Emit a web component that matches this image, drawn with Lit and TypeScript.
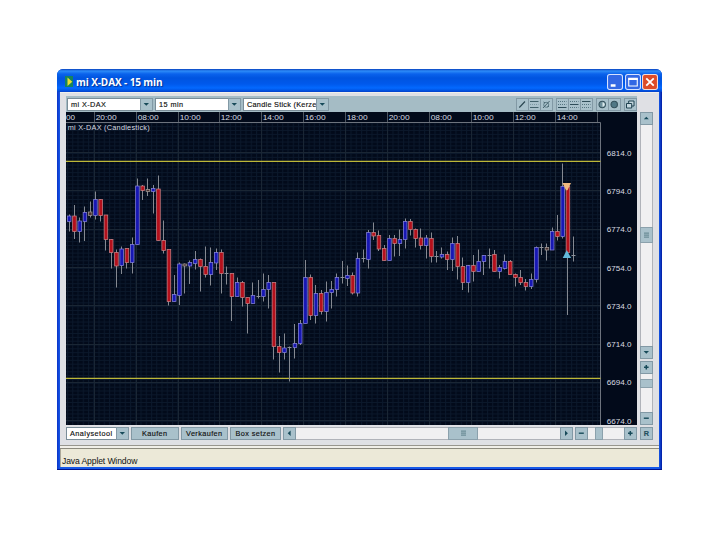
import { LitElement, html, svg, css } from "lit";
import { customElement, property } from "lit/decorators.js";

type Kind = "b" | "r" | "n" | "x";
// high, body top, body bottom, low, kind (up, down, small, doji)
type Candle = [number, number, number, number, Kind];

const CANDLES: Candle[] = [
  [214.5,216,221.5,231.5,"b"],[205,216,231.5,239,"r"],[217.5,221,231.5,242.5,"b"],[206.5,212.5,221.5,241,"b"],
  [201.5,212,215.5,217.5,"n"],[191.5,199.5,215.5,219.5,"b"],[199,199.5,215.5,221.5,"r"],[215,215,239.5,250.5,"r"],
  [239,239.5,252.5,268.5,"r"],[249.5,252.5,266,287.5,"r"],[246.5,249,265.5,274,"b"],[248.5,248.5,262.5,268.5,"r"],
  [237.5,244.5,262.5,273.5,"b"],[178.5,186,244.5,244.5,"b"],[185,186,190.5,200,"r"],[178.5,189.5,191.5,196,"n"],
  [185,188.5,191.5,213.5,"b"],[175.5,189,240.5,240.5,"r"],[220.5,240.5,250.5,253.5,"r"],[249.5,249.5,301.5,305.5,"r"],
  [275,294.5,301.5,301.5,"b"],[262.5,264,295.5,305,"b"],[263.5,264,266,293.5,"n"],[260.5,262.5,266,284,"b"],
  [251,259.5,263.5,269.5,"b"],[258.5,259.5,266.5,291.5,"r"],[246.5,266.5,274.5,277.5,"r"],[247.5,262.5,274.5,285.5,"b"],
  [248.5,252.5,263,270,"b"],[249.5,252.5,273.5,293.5,"r"],[266.5,273,274,284.5,"x"],[273.5,273.5,296.5,321,"r"],
  [277.5,282.5,296.5,296.5,"b"],[281,282.5,297.5,306.5,"r"],[297.5,297.5,303.5,333.5,"r"],[282.5,295.5,303.5,303.5,"b"],
  [280,296,296.5,298.5,"x"],[273.5,289.5,296.5,301.5,"b"],[275,282.5,289.5,308.5,"b"],[282.5,282.5,346.5,359.5,"r"],
  [336,346.5,352.5,372.5,"r"],[333.5,348,352.5,359.5,"b"],[346.5,347.5,348,381.5,"x"],[324,343.5,347.5,358.5,"b"],
  [320,323.5,343.5,345,"b"],[260,277.5,323.5,323.5,"b"],[274.5,277.5,315.5,320,"r"],[285,293.5,315.5,323.5,"b"],
  [290,293.5,311.5,314.5,"r"],[281.5,292.5,311.5,321.5,"b"],[281,289.5,292.5,308.5,"b"],[273.5,277.5,289.5,296.5,"b"],
  [261,277.5,278.5,283.5,"x"],[265.5,275.5,278.5,286,"b"],[272.5,275.5,293,294.5,"r"],[252.5,258.5,293,296.5,"b"],
  [249.5,258.5,259,262.5,"x"],[230,232.5,259.5,268.5,"b"],[222.5,232.5,236,240,"r"],[230.5,235.5,249,251,"r"],
  [245,248.5,260.5,260.5,"r"],[235,238.5,260.5,260.5,"b"],[235,238.5,243.5,256.5,"r"],[229.5,239.5,243.5,256,"b"],
  [218.5,221.5,239.5,248.5,"b"],[219,221.5,229.5,235.5,"r"],[228.5,229.5,238.5,247.5,"r"],[228.5,238,245.5,249.5,"r"],
  [235,238,245.5,258.5,"b"],[232.5,238.5,256.5,262.5,"r"],[251,256.5,257,262.5,"x"],[247.5,254.5,257,258.5,"b"],
  [251.5,254.5,259.5,270,"r"],[237.5,243.5,259.5,271,"b"],[236,243.5,266.5,279.5,"r"],[257.5,266.5,282.5,290,"r"],
  [265,265.5,282.5,292.5,"b"],[255,265.5,271.5,281.5,"r"],[249.5,261.5,271.5,271.5,"b"],[255,255.5,261.5,275,"b"],
  [248.5,255,256,268.5,"x"],[250,254.5,271.5,271.5,"r"],[265,267.5,271.5,278.5,"b"],[254.5,261.5,268.5,269.5,"b"],
  [260,261.5,274.5,274.5,"r"],[273.5,274.5,277.5,286.5,"r"],[270,277.5,282.5,285,"r"],[279,282.5,286.5,290.5,"r"],
  [273.5,279.5,286.5,289,"b"],[246.5,247.5,279.5,282.5,"b"],[243.5,247,248,255,"x"],[243.5,247.5,250,260.5,"n"],
  [227.5,231.5,250,250,"b"],[215,231.5,236.5,240.5,"r"],[163.5,186.5,236.5,238.5,"b"],[186.5,186.5,252.5,315,"r"],
  [236.5,255,256,261.5,"x"],
];
const FILL: Record<Kind, string> = { b: "#1717b4", r: "#b4101c", n: "#4a3030", x: "" };
const EDGE: Record<Kind, string> = { b: "#8583d6", r: "#c98084", n: "#a39a96", x: "" };
const TIMES = ["20:00","08:00","10:00","12:00","14:00","16:00","18:00","20:00","08:00","10:00","12:00","14:00"];
const PRICES = ["6814.0","6794.0","6774.0","6754.0","6734.0","6714.0","6694.0","6674.0"];

@customElement("candle-chart")
class CandleChart extends LitElement {
  static styles = css`
    :host { display: block; width: 571px; height: 313px; }
    svg { display: block; }
    text { font-family: "Liberation Sans", Arial, sans-serif; fill: #d8dbe1; }
    .axis { font-size: 8px; }
    .name { font-size: 7.3px; }
  `;
  private candle([hi, top, bot, lo, kind]: Candle, i: number) {
    const x = 69.1 + i * 5.25;
    const c = Math.floor(x) + 0.5;
    const wick = svg`<line x1=${c} x2=${c} y1=${hi} y2=${lo} stroke="#858991" stroke-width="1"/>`;
    if (kind === "x")
      return svg`${wick}<line x1=${c - 2} x2=${c + 2} y1=${Math.floor(top) + 0.5} y2=${Math.floor(top) + 0.5} stroke="#8d929b"/>`;
    return svg`${wick}<rect x=${x - 1.7} y=${top} width="3.6" height=${Math.max(bot - top, 1.5)}
      fill=${FILL[kind]} stroke=${EDGE[kind]} stroke-width=".75"/>`;
  }
  render() {
    return html`<svg width="571" height="313" viewBox="66 112 571 313">
      <defs>
        <pattern id="minor" width="5.25" height="3.83" patternUnits="userSpaceOnUse" x="67" y="122.4">
          <path d="M.5 0V3.83M0 .5H5.25" stroke="#0b182b" stroke-width="1"/>
        </pattern>
      </defs>
      <rect x="66" y="112" width="571" height="313" fill="#020a1a"/>
      <rect x="66" y="123" width="534" height="302" fill="url(#minor)"/>
      ${PRICES.map((_, i) => svg`<line x1="66" x2="600" y1=${Math.round(152 + i * 38.3) + .5} y2=${Math.round(152 + i * 38.3) + .5} stroke="#1a2634"/>`)}
      ${TIMES.map((t, i) => {
        const x = Math.round(93.6 + i * 41.95) + 0.5;
        return svg`<line x1=${x} x2=${x} y1="123" y2="425" stroke="#1a2634"/>
          <line x1=${x} x2=${x} y1="112" y2="122" stroke="#4f5660"/>
          <text class="axis" x=${x + 1.2} y="120" textLength="21" lengthAdjust="spacingAndGlyphs">${t}</text>`;
      })}
      <text class="axis" x="66" y="120" textLength="9" lengthAdjust="spacingAndGlyphs">00</text>
      <path d="M597.5 112V122" stroke="#4f5660"/>
      <path d="M66 122.5H600.5V425" fill="none" stroke="#6d737d"/>
      <text class="name" x="67.7" y="130" textLength="82" lengthAdjust="spacing">mi X-DAX (Candlestick)</text>
      <path d="M66 161.4H600.5M66 378.4H600.5" stroke="#bdb738" stroke-width="1.2"/>
      ${CANDLES.map((c, i) => this.candle(c, i))}
      <path d="M562.5 183H571L567.5 190.3H566Z" fill="#f0b980"/>
      <path d="M566.8 250L571 258H562.7Z" fill="#62b9da"/>
      ${PRICES.map((p, i) => svg`<text class="axis" x="606.7" y=${155.6 + i * 38.3} textLength="24.7" lengthAdjust="spacingAndGlyphs">${p}</text>`)}
    </svg>`;
  }
}

const GLYPHS: Record<string, unknown> = {
  up: svg`<path d="M3.8 7.2L6.3 4.8L8.8 7.2Z" fill="#174a59"/>`,
  down: svg`<path d="M3.6 5H9L6.3 7.8Z" fill="#174a59"/>`,
  left: svg`<path d="M7.6 3.5V8.9L4.7 6.2Z" fill="#174a59"/>`,
  right: svg`<path d="M5 3.5V8.9L7.9 6.2Z" fill="#174a59"/>`,
  plus: svg`<path d="M4 6.2H8.6M6.3 3.9V8.5" stroke="#174a59" stroke-width="1.5"/>`,
  minus: svg`<path d="M3.8 6.2H8.8" stroke="#174a59" stroke-width="1.4"/>`,
  line: svg`<path d="M3.3 9.5L9 3.5" stroke="#2a4550" stroke-width="1.1"/>`,
  channel: svg`<path d="M2 3.5H10.5M2 9.5H10.5" stroke="#41616b"/><path d="M2 6.5H10.5" stroke="#7b98a3" stroke-dasharray="1 1"/>`,
  cross: svg`<circle cx="6.2" cy="6.8" r="2.5" fill="none" stroke="#557580" stroke-width=".9"/><path d="M3 10L9.6 3M3.5 4L5 5M7.5 9L9 8" stroke="#3c5964" stroke-width=".9"/>`,
  low: svg`<path d="M2 3.5H10.5M2 6.5H10.5" stroke="#557580" stroke-dasharray="1 1"/><path d="M2 9.5H10.5" stroke="#2f4d59"/>`,
  mid: svg`<path d="M2 3.5H10.5M2 9.5H10.5" stroke="#557580" stroke-dasharray="1 1"/><path d="M2 6.5H10.5" stroke="#2f4d59"/>`,
  high: svg`<path d="M2 6.5H10.5M2 9.5H10.5" stroke="#557580" stroke-dasharray="1 1"/><path d="M2 3.5H10.5" stroke="#2f4d59"/>`,
  half: svg`<circle cx="6.2" cy="6.5" r="3.2" fill="#6f919d" stroke="#34515c" stroke-width="1.1"/><path d="M6.5 4.2A2.3 2.3 0 0 1 6.5 8.8Z" fill="#dbe9ec"/>`,
  full: svg`<circle cx="6.2" cy="6.5" r="3.2" fill="#507886" stroke="#34515c" stroke-width="1.1"/>`,
  windows: svg`<path d="M4.7 3H10V8H4.7Z" fill="#c5d8df" stroke="#1f4250"/><path d="M2.5 5.5H7.7V10H2.5Z" fill="#c5d8df" stroke="#1f4250"/>`,
  grip: svg`<path d="M4 4.2H9M4 6.2H9M4 8.2H9" stroke="#6c8d98" stroke-width="1.2"/>`,
};

@customElement("tool-glyph")
class ToolGlyph extends LitElement {
  @property() name = "";
  static styles = css`
    :host { display: grid; place-items: center; width: 13px; height: 13px; box-sizing: border-box;
      background: #a9c1cb; box-shadow: inset 0 0 0 1px #8299a5; flex: none; overflow: hidden; }
    svg { display: block; width: 13px; height: 13px; }
  `;
  render() { return html`<svg viewBox="0 0 13 13">${GLYPHS[this.name]}</svg>`; }
}

@customElement("app-root")
class AppRoot extends LitElement {
  static styles = css`
    :host { display: block; box-sizing: border-box; width: 720px; height: 540px; padding: 69px 58px 70px 57px;
      background: #fff; font-family: "Liberation Sans", Arial, sans-serif; font-size: 7.3px; color: #111; }
    * { box-sizing: border-box; }
    .window { height: 401px; width: 605px; display: flex; flex-direction: column; border-radius: 6px 6px 0 0;
      background: linear-gradient(90deg, #0a32c8, #1659e8 3px, #1659e8 602px, #0019a0 605px); overflow: hidden;
      padding: 0 3px 3px; border-bottom: 1px solid #00138c; }
    .title { height: 23px; flex: none; margin: 0 -3px; padding: 2px 4px 0 8px; display: flex; align-items: center;
      background: linear-gradient(#0840bf, #2d8cf8 2px, #0a62ec 5px, #0054e0 9px, #0059ec 15px, #0369ff 19px, #0058e9 21px, #0540c8); }
    .logo { width: 8px; height: 11px; margin-right: 3px; }
    .name { margin: 0; flex: 1; color: #fff; font: 700 10px "Open Sans", "Noto Sans", sans-serif; letter-spacing: -.1px;
      white-space: nowrap; text-shadow: 1px 1px 1px #003093; line-height: 18px; }
    .caption { display: flex; gap: 1.5px; }
    .caption svg { display: block; width: 16px; height: 16px; }
    .body { flex: none; height: 354px; background: #dfe0e4; padding: 3px 8px 0 6px; display: grid;
      grid-template-columns: 571px 13px; column-gap: 3px; grid-template-rows: 16px 313px 2px 13px; border-top: 1px solid #f0efeb;
      border-bottom: 1px solid #98968e; }
    .bar { display: flex; align-items: center; background: #a5bcc5; padding-left: 1px; }
    .combo { height: 13px; display: flex; border: 1px solid #7a8d98; background: #fff; margin-right: 2px; padding-left: 3px; flex: none; }
    .combo span { flex: 1; white-space: nowrap; line-height: 12px; }
    .combo span, .btn { -webkit-text-stroke: .15px currentColor; }
    .combo tool-glyph { margin: -1px; }
    .w86 { width: 86px; } .w63 { width: 63px; }
    .s1 { letter-spacing: .42px; } .s2 { letter-spacing: .45px; } .s3 { letter-spacing: .27px; }
    .tools { margin-left: auto; display: flex; gap: 3px; }
    .group { display: flex; }
    .group tool-glyph + tool-glyph { margin-left: -1px; }
    .chart { grid-row: 2; grid-column: 1; }
    .vert { grid-column: 2; grid-row: 2; display: flex; flex-direction: column; gap: 2px; }
    .track { background: #f0f0f1; box-shadow: inset 0 0 0 1px #b0b3b9; display: flex; }
    .col { flex-direction: column; }
    .thumb { background: #a9c1cb; box-shadow: inset 0 0 0 1px #8ba1ac; display: grid; place-items: center; flex: none; }
    .thumb tool-glyph { background: none; box-shadow: none; }
    .v1 { height: 247px; } .v2 { flex: 1; }
    .t1 { height: 16px; margin: 102px 0 auto; } .t2 { height: 9px; margin: 5px 0 auto; }
    .bottom { grid-row: 4; grid-column: 1; display: flex; gap: 2px; }
    .bottom .combo { margin: 0; }
    .btn { height: 13px; background: #a9c1cb; box-shadow: inset 0 0 0 1px #8299a5; text-align: center; line-height: 13px;
      letter-spacing: .4px; flex: none; white-space: nowrap; }
    .b48 { width: 47.5px; } .b51 { width: 51px; }
    .scroll { width: 290px; flex: none; }
    .zoom { flex: 1; }
    .ht1 { width: 30px; margin: 0 auto 0 152px; } .ht2 { width: 8px; margin: 0 auto 0 6.5px; }
    .r { grid-row: 4; grid-column: 2; font-weight: 700; color: #23505e; letter-spacing: 0; }
    .status { flex: 1; background: #ece9d8; border-top: 1px solid #8d8a7e; box-shadow: inset 1px 0 #aca899; padding: 6px 0 0 2px;
      font: 8.6px "Liberation Sans", Arial, sans-serif; line-height: 12px; letter-spacing: -.12px; }
    .gap { height: 2px; flex: none; background: #f1efe8; }
  `;
  render() {
    const g = (name: string) => html`<tool-glyph name=${name}></tool-glyph>`;
    return html`<div class="window">
      <div class="title">
        <svg class="logo" viewBox="0 0 8 11"><path d="M0 0H8V11H0Z" fill="#16835e"/><path d="M2.5 1.5L7.3 5.7L2.5 10Z" fill="#eade32"/></svg>
        <h1 class="name">mi X-DAX - 15 min</h1>
        <div class="caption">
          <svg viewBox="0 0 15 15"><rect x=".5" y=".5" width="14" height="14" rx="2" fill="#3268e4" stroke="#d5e2ff"/><path d="M3.5 10.8H8" stroke="#fff" stroke-width="2.2"/></svg>
          <svg viewBox="0 0 15 15"><rect x=".5" y=".5" width="14" height="14" rx="2" fill="#3268e4" stroke="#d5e2ff"/><path d="M3.5 4.5H11.5V11.2H3.5Z" fill="none" stroke="#fff"/><path d="M3 4.5H12" stroke="#fff" stroke-width="2.2"/></svg>
          <svg viewBox="0 0 15 15"><rect x=".5" y=".5" width="14" height="14" rx="2" fill="#dc4c28" stroke="#f5dcd5"/><path d="M4 4L11 11M11 4L4 11" stroke="#fff" stroke-width="1.7"/></svg>
        </div>
      </div>
      <div class="body">
        <div class="bar">
          <div class="combo w86"><span class="s1">mi X-DAX</span>${g("down")}</div>
          <div class="combo w86"><span class="s2">15 min</span>${g("down")}</div>
          <div class="combo w86"><span class="s3">Candle Stick (Kerze</span>${g("down")}</div>
          <div class="tools">
            <div class="group">${["line", "channel", "cross"].map(g)}</div>
            <div class="group">${["low", "mid", "high"].map(g)}</div>
            <div class="group">${["half", "full"].map(g)}</div>
            <div class="group">${g("windows")}</div>
          </div>
        </div>
        <candle-chart class="chart"></candle-chart>
        <div class="vert">
          <div class="track col v1">${g("up")}<div class="thumb t1">${g("grip")}</div>${g("down")}</div>
          <div class="track col v2">${g("plus")}<div class="thumb t2"></div>${g("minus")}</div>
        </div>
        <div class="bottom">
          <div class="combo w63"><span class="s2">Analysetool</span>${g("down")}</div>
          <div class="btn b48">Kaufen</div>
          <div class="btn b48">Verkaufen</div>
          <div class="btn b51">Box setzen</div>
          <div class="track scroll">${g("left")}<div class="thumb ht1">${g("grip")}</div>${g("right")}</div>
          <div class="track zoom">${g("minus")}<div class="thumb ht2"></div>${g("plus")}</div>
        </div>
        <div class="btn r">R</div>
      </div>
      <div class="gap"></div>
      <div class="status">Java Applet Window</div>
    </div>`;
  }
}
